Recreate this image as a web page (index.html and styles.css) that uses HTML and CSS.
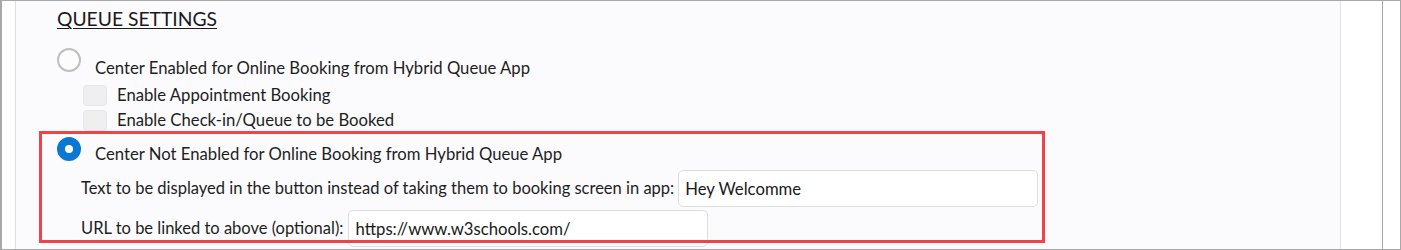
FILE: index.html
```html
<!DOCTYPE html>
<html lang="en">
<head>
<meta charset="utf-8">
<title>Queue Settings</title>
<link rel="stylesheet" href="styles.css">
</head>
<body>
<div class="frame">
  <div class="gutter"></div>
  <div class="panel">
    <h2 class="title">QUEUE SETTINGS</h2>
    <div class="option">
      <span class="radio"></span>
      <span class="opt-label first">Center Enabled for Online Booking from Hybrid Queue App</span>
    </div>
    <div class="checks">
      <div class="check-row"><span class="checkbox"></span><span class="check-label">Enable Appointment Booking</span></div>
      <div class="check-row"><span class="checkbox"></span><span class="check-label">Enable Check-in/Queue to be Booked</span></div>
    </div>
    <div class="highlight">
      <div class="option">
        <span class="radio checked"></span>
        <span class="opt-label second">Center Not Enabled for Online Booking from Hybrid Queue App</span>
      </div>
      <div class="field-row">
        <label class="field-label">Text to be displayed in the button instead of taking them to booking screen in app:</label>
        <input class="field-input" type="text" value="Hey Welcomme" readonly>
      </div>
      <div class="field-row second-field">
        <label class="field-label">URL to be linked to above (optional):</label>
        <input class="field-input" type="text" value="https://www.w3schools.com/" readonly>
      </div>
    </div>
  </div>
  <div class="spacer"></div>
  <div class="rail"></div>
  <div class="end"></div>
</div>
</body>
</html>
```

FILE: styles.css
```css
* { box-sizing: border-box; }
html, body { margin: 0; padding: 0; background: #ffffff; }
body { font-family: Lato, "Liberation Sans", sans-serif; color: #1e1e1e; }

.frame {
  width: 1401px;
  height: 250px;
  display: flex;
  border-style: solid;
  border-color: #a8a8a8;
  border-width: 1px 1px 1px 2px;
  overflow: hidden;
  background: #ffffff;
}
.gutter { width: 13px; flex: none; }
.panel {
  width: 1326px;
  flex: none;
  background: #fbfbfd;
  border-left: 1px solid #dfdfec;
  border-right: 1px solid #dfdfec;
  padding: 6px 0 0 41px;
  display: flex;
  flex-direction: column;
  align-items: flex-start;
}
.spacer { width: 41px; flex: none; }
.rail { width: 1px; flex: none; background: #a8a8a8; }
.end { flex: 1; }

.title {
  margin: 0;
  font-size: 19.3px;
  line-height: 23px;
  font-weight: 400;
  text-decoration: underline;
  text-underline-offset: 2px;
  text-decoration-thickness: 1px;
  color: #1a1a1a;
}

.option {
  display: flex;
  align-items: flex-start;
  margin-top: 18px;
}
.radio {
  width: 24px;
  height: 24px;
  flex: none;
  border-radius: 50%;
  border: 2px solid #bfbfbf;
  background: #fcfcfc;
}
.radio.checked {
  border: 8px solid #0a78d2;
  background: #ffffff;
}
.opt-label {
  font-size: 16.7px;
  line-height: 21px;
  margin-left: 14px;
  white-space: nowrap;
}
.opt-label.first { padding-top: 10px; }
.opt-label.second { padding-top: 7px; }

.checks {
  margin: 6px 0 0 26px;
  display: flex;
  flex-direction: column;
  gap: 5px;
}
.check-row {
  display: flex;
  align-items: flex-start;
  height: 20px;
}
.checkbox {
  width: 24px;
  height: 21px;
  flex: none;
  border-radius: 4px;
  background: #efefef;
  border: 1px solid #e6e6e6;
}
.check-label {
  font-size: 16.7px;
  line-height: 20px;
  margin-left: 10px;
  white-space: nowrap;
}

.highlight {
  position: relative;
  margin: 1px 0 0 -18px;
  width: 1006px;
  height: 112px;
  padding: 6px 0 0 18px;
  display: flex;
  flex-direction: column;
  align-items: flex-start;
}
.highlight::after {
  content: "";
  position: absolute;
  inset: 0;
  border: 3px solid #ef4249;
  pointer-events: none;
}
.highlight .option { margin-top: 0; }

.field-row {
  display: flex;
  align-items: center;
  margin: 5px 0 0 24px;
}
.field-row.second-field { margin-top: 3px; }
.field-label {
  font-size: 16.5px;
  line-height: 21px;
  margin-right: 4px;
  white-space: nowrap;
  flex: none;
}
.second-field .field-label { margin-right: 5px; }
.field-input {
  width: 360px;
  height: 37px;
  flex: none;
  border: 1px solid #dedede;
  border-radius: 5px;
  background: #ffffff;
  padding: 0 6px;
  font-family: Lato, "Liberation Sans", sans-serif;
  font-size: 16.7px;
  color: #1a1a1a;
  outline: none;
}
```
